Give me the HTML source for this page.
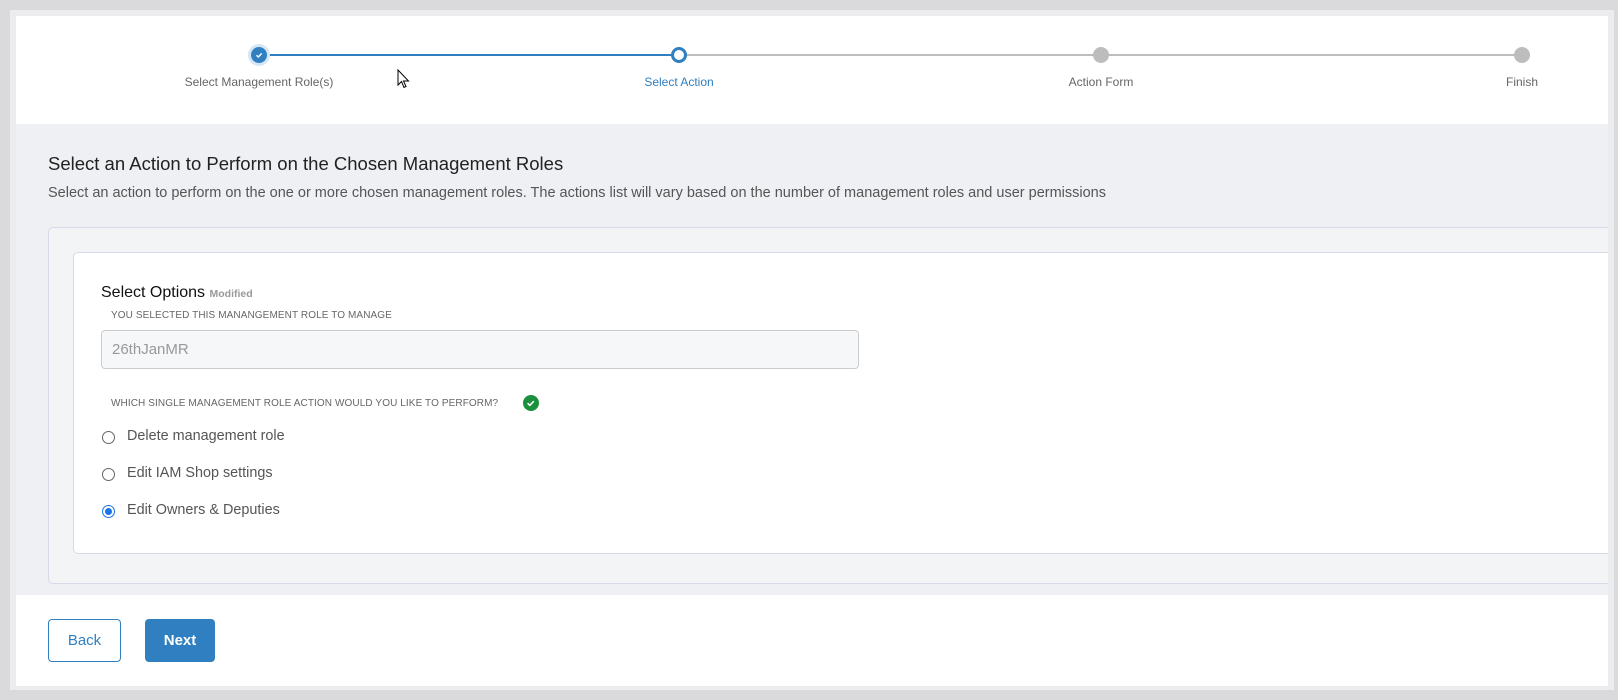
<!DOCTYPE html>
<html><head><meta charset="utf-8"><style>
*{box-sizing:border-box;margin:0;padding:0}
body{width:1618px;height:700px;background:#dadadc;font-family:"Liberation Sans",sans-serif;position:relative;overflow:hidden}
.frame{position:absolute;left:10px;top:10px;width:1604px;height:680px;background:#ececef}
.abs{position:absolute}
.top{left:16px;top:16px;width:1592px;height:108px;background:#fff}
.gray{left:16px;top:124px;width:1592px;height:471px;background:#eef0f3}
.foot{left:16px;top:595px;width:1592px;height:91px;background:#fff}
.line{height:2px;top:54px}
.lbl{font-size:12px;color:#666;top:75px;transform:translateX(-50%);white-space:nowrap}
.dot{width:16px;height:16px;border-radius:50%;top:47px;margin-left:-8px;background:#bdbdbd}
.card{left:48px;top:227px;width:1600px;height:357px;background:#f3f4f6;border:1px solid #d5d9e8;border-radius:5px}
.inner{left:73px;top:252px;width:1580px;height:302px;background:#fff;border:1px solid #d5d9e8;border-radius:5px}
.cap{font-size:10px;color:#666;letter-spacing:.1px}
.radio{width:13px;height:13px;border:1px solid #666;border-radius:50%;left:102px}
.rt{left:127px;font-size:14.4px;color:#555}
</style></head><body>
<div class="frame"></div>
<div class="abs top"></div>
<div class="abs gray"></div>
<div class="abs foot"></div>
<div class="abs line" style="left:259px;width:420px;background:#2f7fc1"></div>
<div class="abs line" style="left:679px;width:843px;background:#bdbdbd"></div>
<div class="abs" style="left:248px;top:44px;width:22px;height:22px;border-radius:50%;background:#d6e6f4"></div>
<div class="abs" style="left:251px;top:47px;width:16px;height:16px;border-radius:50%;background:#2f7fc1"></div>
<svg class="abs" style="left:254px;top:50px" width="10" height="10" viewBox="0 0 10 10"><path d="M2.5 5.2l1.8 1.8 3.4-3.6" stroke="#fff" stroke-width="1.4" fill="none"/></svg>
<div class="abs" style="left:671px;top:47px;width:16px;height:16px;border-radius:50%;background:#fff;border:3px solid #2f7fc1"></div>
<div class="abs dot" style="left:1101px"></div>
<div class="abs dot" style="left:1522px"></div>
<div class="abs lbl" style="left:259px">Select Management Role(s)</div>
<div class="abs lbl" style="left:679px;color:#2f7fc1">Select Action</div>
<div class="abs lbl" style="left:1101px">Action Form</div>
<div class="abs lbl" style="left:1522px">Finish</div>
<svg class="abs" style="left:397px;top:69px" width="14" height="21" viewBox="0 0 14 21"><path d="M1 1v15l3.5-3.5 2.5 6 2-1-2.5-5.5h5z" fill="#fff" stroke="#000" stroke-width="1"/></svg>
<div class="abs" style="left:48px;top:153px;font-size:18.5px;color:#222">Select an Action to Perform on the Chosen Management Roles</div>
<div class="abs" style="left:48px;top:185px;font-size:14.5px;color:#555;white-space:nowrap">Select an action to perform on the one or more chosen management roles. The actions list will vary based on the number of management roles and user permissions</div>
<div class="abs card"></div>
<div class="abs inner"></div>
<div class="abs" style="left:101px;top:284px;font-size:16px;color:#111">Select Options <span style="font-size:10.5px;color:#999;font-weight:bold">Modified</span></div>
<div class="abs cap" style="left:111px;top:310px">YOU SELECTED THIS MANANGEMENT ROLE TO MANAGE</div>
<div class="abs" style="left:101px;top:330px;width:758px;height:39px;background:#f6f7f9;border:1px solid #ccc;border-radius:4px;font-size:15px;color:#999;padding:10px 10px">26thJanMR</div>
<div class="abs cap" style="left:111px;top:398px">WHICH SINGLE MANAGEMENT ROLE ACTION WOULD YOU LIKE TO PERFORM?</div>
<svg class="abs" style="left:523px;top:395px" width="16" height="16" viewBox="0 0 16 16"><circle cx="8" cy="8" r="8" fill="#1a8f3c"/><path d="M4.6 8.2l2.2 2.2 4-4.2" stroke="#fff" stroke-width="1.6" fill="none"/></svg>
<div class="abs radio" style="top:431px"></div>
<div class="abs rt" style="top:428px">Delete management role</div>
<div class="abs radio" style="top:468px"></div>
<div class="abs rt" style="top:465px">Edit IAM Shop settings</div>
<div class="abs radio" style="top:505px;border-color:#1a73e8"></div>
<div class="abs" style="left:105px;top:508px;width:7px;height:7px;border-radius:50%;background:#1a73e8"></div>
<div class="abs rt" style="top:502px">Edit Owners &amp; Deputies</div>
<div class="abs" style="left:48px;top:619px;width:73px;height:43px;border:1px solid #2f7fc1;border-radius:4px;color:#2f7fc1;font-size:15px;text-align:center;line-height:41px">Back</div>
<div class="abs" style="left:145px;top:619px;width:70px;height:43px;background:#2f7fc1;border-radius:4px;color:#fff;font-size:15px;font-weight:bold;text-align:center;line-height:43px">Next</div>
<div class="abs" style="left:1608px;top:10px;width:6px;height:680px;background:#ececef"></div>
<div class="abs" style="left:1614px;top:0;width:4px;height:700px;background:#dadadc"></div>
</body></html>
